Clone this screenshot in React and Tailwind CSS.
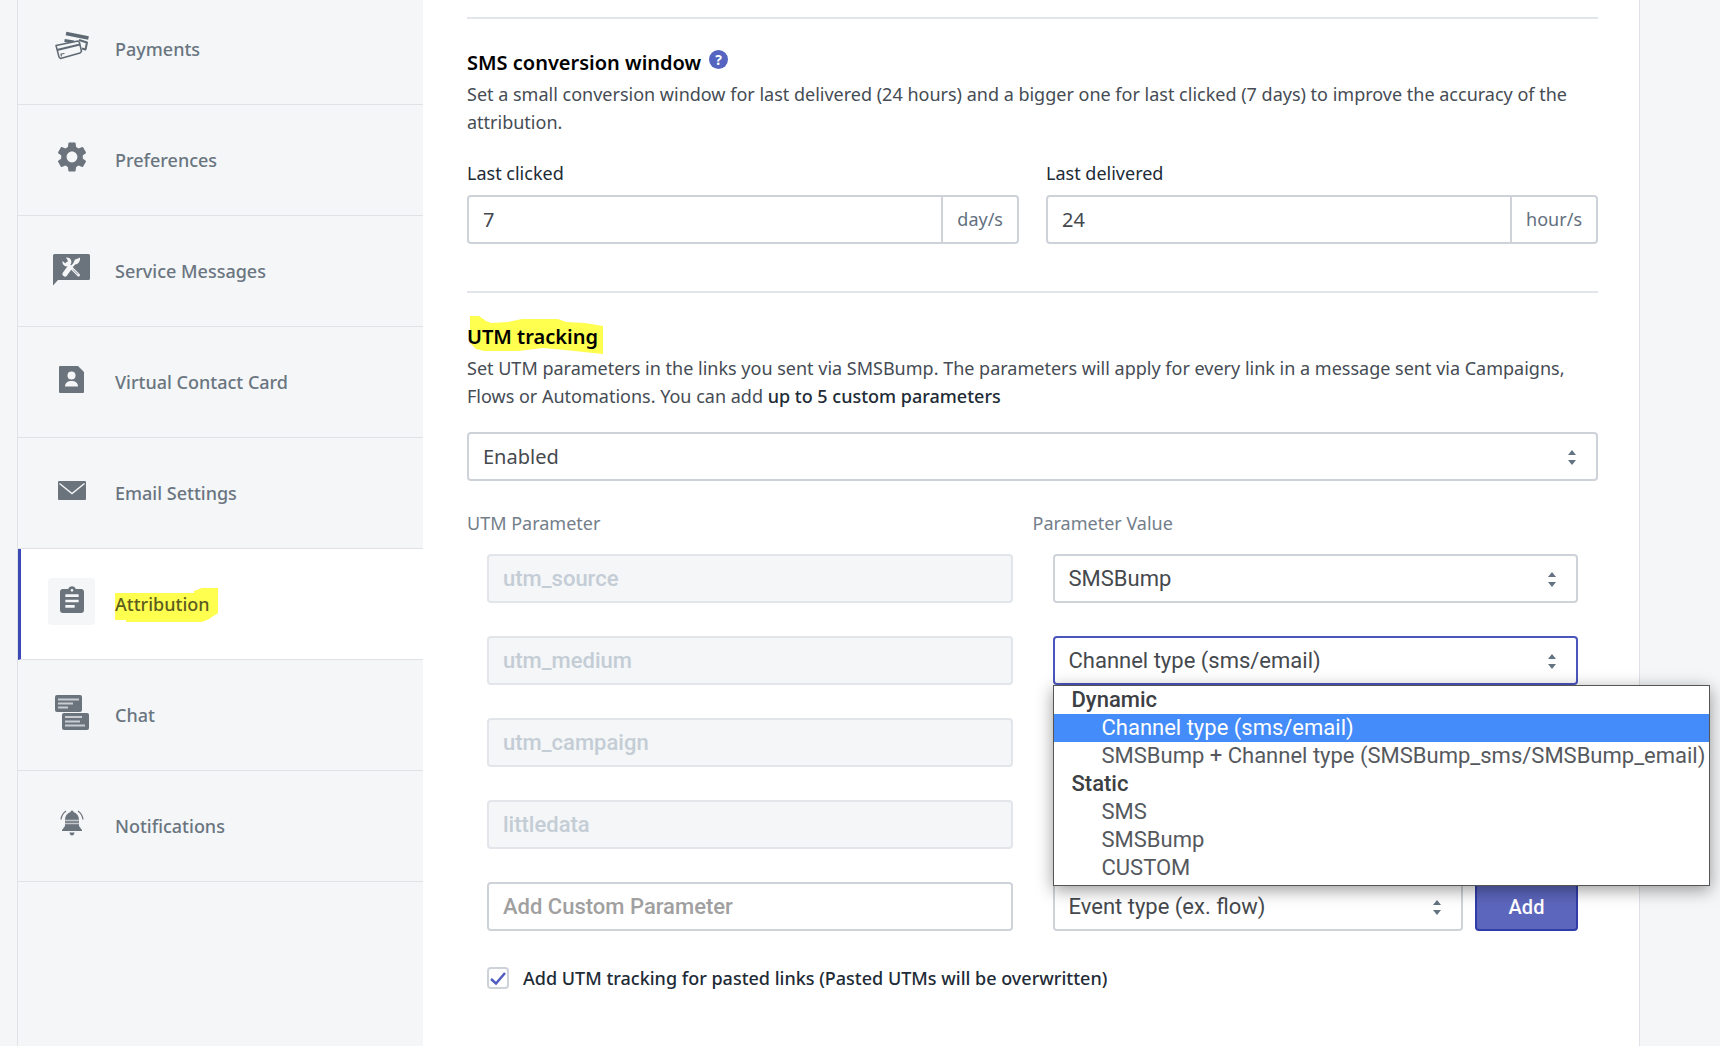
import { useState } from 'react';
import clsx from 'clsx';
import { MdAssignment, MdSettings } from 'react-icons/md';

const PaymentsIcon = () => (
    <svg width="36" height="32" viewBox="0 0 36 32" fill="none" stroke="#5f6973" strokeWidth="1.5" strokeLinejoin="round">
        <path d="M12 3.5 34.500 8" strokeWidth="3.6" />
        <path d="M10.500 10.500 20 12" strokeWidth="3" />
        <path d="M25 10 33 12.500 31.500 19.500 28 18.500" strokeWidth="2" />
        <path d="M2 15.500 24 11l1.500 1.500 2 9-1.500 1.500L6.500 28.500 5 27z" fill="#f4f6f8" />
        <path d="M3 20 26 14.500" strokeWidth="2" />
        <path d="M7.500 26.500 7 24 10.500 23.500" strokeWidth="1.200" />
    </svg>
);

const ServiceIcon = () => (
    <svg className="mt-1" width="37" height="32" viewBox="0 0 37 32">
        <path d="M1.500 0h34A1.500 1.500 0 0 1 37 1.500v23a1.500 1.500 0 0 1-1.500 1.500H5l-5 5.500v-30A1.500 1.500 0 0 1 1.500 0z" fill="#6b737c" />
        <path d="M11 20.500 24 7" stroke="#f4f6f8" strokeWidth="2.500" />
        <path d="M22 5.500 25 4.500 27 3.500 27 6 25.500 9 23 10.500 20.500 8.500z" fill="#f4f6f8" />
        <path d="M16 14.500 12 20" stroke="#f4f6f8" strokeWidth="5" strokeLinecap="round" />
        <path d="M14 9.500 25.500 21" stroke="#f4f6f8" strokeWidth="3" strokeLinecap="round" />
        <path d="M20 15.500 25 20.500" stroke="#6b737c" strokeWidth="0.800" />
        <path d="M13 3.500a4.500 4.500 0 1 1-3.500 3.500l3 2.500 2.500-2.500z" fill="#f4f6f8" />
    </svg>
);

const ContactIcon = () => (
    <svg width="25" height="27" viewBox="0 0 25 27">
        <path d="M1 0h18l6 6v20a1 1 0 0 1-1 1H1a1 1 0 0 1-1-1V1a1 1 0 0 1 1-1z" fill="#6b737c" />
        <circle cx="12.500" cy="9.500" r="4" fill="#f4f6f8" />
        <path d="M6 20.500c0-3.500 2.500-5.500 6.500-5.500s6.500 2 6.500 5.500z" fill="#f4f6f8" />
    </svg>
);

const EmailIcon = () => (
    <svg width="28" height="19" viewBox="0 0 28 19">
        <rect width="28" height="19" rx="1" fill="#6b737c" />
        <path d="m1.500 2.500 12.500 10 12.500-10" fill="none" stroke="#f4f6f8" strokeWidth="1.400" />
    </svg>
);

const ChatIcon = () => (
    <svg width="34" height="35" viewBox="0 0 34 35">
        <rect width="27" height="17" rx="2" fill="#6b737c" />
        <path d="M3 4.500h21M3 8.500h15M3 12.500h10" stroke="#c9cdd1" strokeWidth="1.800" />
        <rect x="7" y="18" width="27" height="17" rx="2" fill="#6b737c" />
        <path d="M10 22h17M10 26.500h15M10 30.500h20" stroke="#c9cdd1" strokeWidth="1.800" />
    </svg>
);

const BellIcon = () => (
    <svg width="24" height="26" viewBox="0 0 24 26" fill="#6b737c">
        <path d="M10.500 2a1.500 1.500 0 0 1 3 0c3.500 1.500 5.500 4 5.500 8v6l3 4v1H2v-1l3-4v-6c0-4 2-6.500 5.500-8z" />
        <path d="M9.500 22.500h5c0 1.500-1 3-2.500 3s-2.500-1.500-2.500-3z" />
        <path d="M5 10.500h14M5 13.500h14" stroke="#c3c7cc" strokeWidth="1.300" />
        <path d="M6 1C3 3 1.500 6 1 9.500M18 1c3 2 4.500 5 5 8.500" fill="none" stroke="#6b737c" strokeWidth="1.200" />
    </svg>
);

const navItems = [
    { label: 'Payments', icon: <PaymentsIcon /> },
    { label: 'Preferences', icon: <MdSettings size={36} /> },
    { label: 'Service Messages', icon: <ServiceIcon /> },
    { label: 'Virtual Contact Card', icon: <ContactIcon /> },
    { label: 'Email Settings', icon: <EmailIcon /> },
    { label: 'Attribution', icon: <MdAssignment size={32} />, active: true },
    { label: 'Chat', icon: <ChatIcon /> },
    { label: 'Notifications', icon: <BellIcon /> },
];

const optionGroups = [
    {
        name: 'Dynamic',
        options: ['Channel type (sms/email)', 'SMSBump + Channel type (SMSBump_sms/SMSBump_email)'],
    },
    { name: 'Static', options: ['SMS', 'SMSBump', 'CUSTOM'] },
];

const Sidebar = () => (
    <nav className="-mt-1.5 w-[405px] shrink-0 bg-[#f4f6f8]">
        {navItems.map((item) => (
            <a
                key={item.label}
                href="#"
                className={clsx(
                    'flex h-[111px] items-center gap-5 border-b border-[#dfe3e8] text-[18px] font-medium text-[#6a7580]',
                    item.active ? 'border-l-3 border-l-[#3b48b5] bg-white pl-[27px]' : 'pl-[30px]'
                )}
            >
                <span className={clsx('mb-1.5 flex size-[47px] items-center justify-center rounded-sm text-[#6b737c]', item.active && 'bg-[#f4f6f8]')}>
                    {item.icon}
                </span>
                {item.active ? (
                    <span className="relative text-[#5c5c20]">
                        <svg className="absolute -top-1 left-0 h-[35px] w-[103px]" viewBox="0 0 103 35">
                            <path d="M0 6h79v-2l8-3h16v25l-9 6-7 3H11v-2H0z" fill="#ffff4f" />
                        </svg>
                        <span className="relative">{item.label}</span>
                    </span>
                ) : (
                    <span>{item.label}</span>
                )}
            </a>
        ))}
    </nav>
);

const NumberField = ({ id, label, value, unit }) => (
    <div className="flex-1">
        <label htmlFor={id} className="block text-[18px] leading-7 text-[#212b36]">{label}</label>
        <div className="mt-2 flex h-[49px] rounded-sm border-2 border-[#ced3da] bg-white">
            <input id={id} defaultValue={value} className="min-w-0 flex-1 px-3.5 text-[20px] text-[#45494e] outline-none" />
            <span className="flex items-center border-l-2 border-[#ced3da] px-3.5 text-[18px] text-[#637080]">{unit}</span>
        </div>
    </div>
);

const Select = ({ label, children, focused, className, textSize = 'text-[22px]', ...props }) => (
    <div className={clsx('relative', className)}>
        <select
            aria-label={label}
            className={clsx(
                'h-[49px] w-full appearance-none rounded-sm border-2 bg-white px-3.5 text-[#45494e] outline-none',
                textSize,
                focused ? 'border-[#4a55bd]' : 'border-[#ced3da]'
            )}
            {...props}
        >
            {children}
        </select>
        <svg className="pointer-events-none absolute top-[18px] right-[22px]" width="8" height="15" viewBox="0 0 8 15" fill="#637381">
            <path d="M4 0 8 5H0zM4 15 0 10h8z" />
        </svg>
    </div>
);

const Divider = () => <hr className="border-t-2 border-[#e2e6ea]" />;

const OptionList = ({ selected, onSelect }) => (
    <div role="listbox" aria-label="utm_medium values" className="absolute top-full left-0 z-10 w-max border border-[#555] bg-white pb-[3px] text-[22px] leading-7 text-[#55595e] shadow-[0_4px_16px_rgba(0,0,0,0.4)]">
        {optionGroups.map((group) => (
            <div key={group.name} role="group" aria-label={group.name}>
                <div className="pl-[18px] font-medium text-[#3c4043]">{group.name}</div>
                {group.options.map((option) => (
                    <button
                        key={option}
                        type="button"
                        role="option"
                        aria-selected={option === selected}
                        onClick={() => onSelect(option)}
                        className={clsx('block w-full pr-1 pl-12 text-left', option === selected && 'bg-[#448cf9] text-white')}
                    >
                        {option}
                    </button>
                ))}
            </div>
        ))}
    </div>
);

const ParamInput = ({ name }) => (
    <input
        aria-label={name}
        value={name}
        disabled
        className="h-[49px] w-full rounded-sm border-2 border-[#e2e6ea] bg-[#f4f6f8] px-3.5 text-[22px] font-medium text-[#c4cdd5]"
    />
);

const App = () => {
    const [medium, setMedium] = useState('Channel type (sms/email)');
    const [pasted, setPasted] = useState(true);

    return (
        <div className="min-h-screen overflow-hidden bg-[#f4f6f8] pr-20 pl-[17px] font-['Noto_Sans',sans-serif]">
            <div className="flex min-h-screen border-x border-[#dfe3e8] bg-[#f4f6f8]">
                <Sidebar />
                <main className="min-w-0 flex-1 bg-white pt-[17px] pr-[41px] pl-11">
                    <Divider />

                    <section className="mt-[30px] mb-[47px]">
                        <div className="flex items-center gap-2">
                            <h2 className="text-[20px] leading-7 font-semibold text-black">SMS conversion window</h2>
                            <button type="button" aria-label="Help" className="mb-2 flex size-[19px] items-center justify-center rounded-full bg-[#5563c1] text-[14px] font-bold text-white">
                                ?
                            </button>
                        </div>
                        <p className="mt-[3px] text-[18px] leading-7 text-[#454c54]">
                            Set a small conversion window for last delivered (24 hours) and a bigger one for last clicked (7 days) to improve the accuracy of the attribution.
                        </p>
                        <div className="mt-[23px] flex gap-[27px]">
                            <NumberField id="last-clicked" label="Last clicked" value="7" unit="day/s" />
                            <NumberField id="last-delivered" label="Last delivered" value="24" unit="hour/s" />
                        </div>
                    </section>

                    <Divider />

                    <section className="mt-[30px]">
                        <h2 className="text-[20px] leading-7 font-semibold text-black">
                            <span className="relative">
                                <svg className="absolute -top-2 left-0 h-[39px] w-[136px]" viewBox="0 0 136 39">
                                    <path d="M3 1h9l7 5 5 2 17-1 14-3h36l8 3 19 1 18 3v28l-10-1-28-3-22-2-25 3H17l-8-2-6-6z" fill="#ffff4f" />
                                </svg>
                                <span className="relative">UTM tracking</span>
                            </span>
                        </h2>
                        <p className="mt-[3px] text-[18px] leading-7 text-[#454c54]">
                            Set UTM parameters in the links you sent via SMSBump. The parameters will apply for every link in a message sent via Campaigns, Flows or Automations. You can add <span className="font-medium text-[#212b36]">up to 5 custom parameters</span>
                        </p>
                        <Select label="UTM tracking" className="mt-[22px]" textSize="text-[20px]">
                            <option>Enabled</option>
                            <option>Disabled</option>
                        </Select>

                        <div className="mt-7 grid grid-cols-2 text-[18px] leading-7 text-[#737e8a]">
                            <div>UTM Parameter</div>
                            <div>Parameter Value</div>
                        </div>
                        <div className="mt-[17px] grid grid-cols-2 gap-x-10 gap-y-[33px] px-5 font-[Roboto,sans-serif]">
                            <ParamInput name="utm_source" />
                            <Select label="utm_source value">
                                <option>SMSBump</option>
                            </Select>
                            <ParamInput name="utm_medium" />
                            <div className="relative">
                                <Select label="utm_medium value" focused value={medium} onChange={(e) => setMedium(e.target.value)}>
                                    {optionGroups.map((group) => (
                                        <optgroup key={group.name} label={group.name}>
                                            {group.options.map((option) => <option key={option}>{option}</option>)}
                                        </optgroup>
                                    ))}
                                </Select>
                                <OptionList selected={medium} onSelect={setMedium} />
                            </div>
                            <ParamInput name="utm_campaign" />
                            <div />
                            <ParamInput name="littledata" />
                            <div />
                            <input
                                aria-label="Add Custom Parameter"
                                placeholder="Add Custom Parameter"
                                className="h-[49px] w-full rounded-sm border-2 border-[#ced3da] px-3.5 text-[22px] font-medium outline-none placeholder:text-[#a0a0a0]"
                            />
                            <div className="flex gap-3">
                                <Select label="Custom parameter value" className="flex-1">
                                    <option>Event type (ex. flow)</option>
                                </Select>
                                <button type="button" className="w-[103px] rounded-sm border-2 border-[#303da8] bg-[#5c66bd] text-[20px] font-medium text-white">
                                    Add
                                </button>
                            </div>
                        </div>

                        <label className="mt-[33px] flex items-center gap-3.5 px-5 text-[18px] leading-7 font-medium text-[#212b36]">
                            <span className="relative size-[22px]">
                                <input
                                    type="checkbox"
                                    checked={pasted}
                                    onChange={(e) => setPasted(e.target.checked)}
                                    className="block size-[22px] appearance-none rounded-sm border-2 border-[#ced3da] bg-white"
                                />
                                {pasted && (
                                    <svg className="pointer-events-none absolute inset-0" width="22" height="22" viewBox="0 0 22 22" fill="none" stroke="#4f5cc0" strokeWidth="2.500">
                                        <path d="m4 12 5 4.500L18 6" />
                                    </svg>
                                )}
                            </span>
                            Add UTM tracking for pasted links (Pasted UTMs will be overwritten)
                        </label>
                    </section>
                </main>
            </div>
        </div>
    );
};

export default App;
